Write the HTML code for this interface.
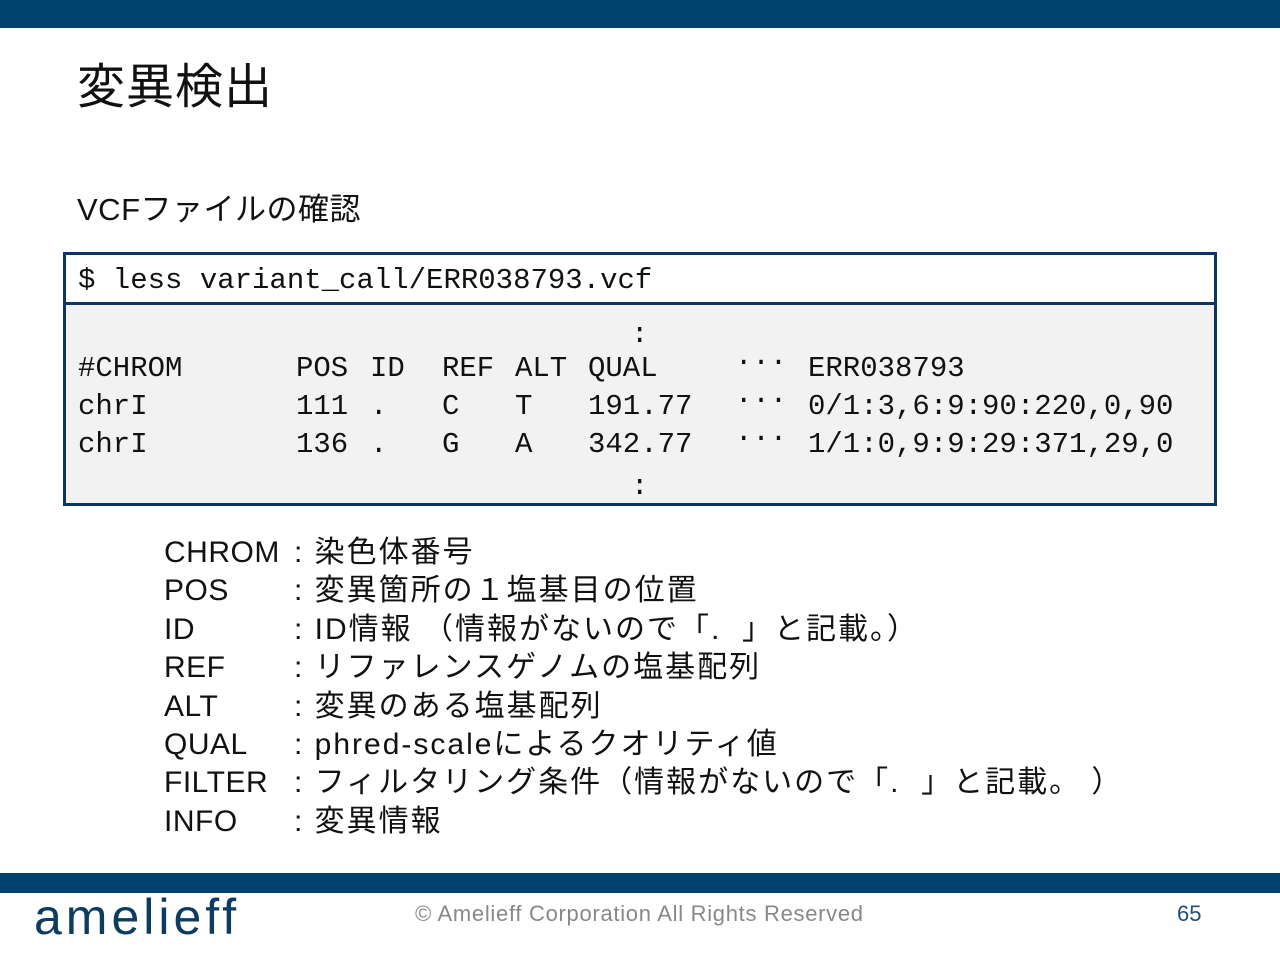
<!DOCTYPE html>
<html><head><meta charset="utf-8"><style>
body{margin:0;width:1280px;height:960px;position:relative;background:#fff;overflow:hidden;font-family:"Liberation Sans","Noto Sans CJK JP",sans-serif;color:#111}
.a{position:absolute;white-space:nowrap}
.m{font-family:"Liberation Mono","DejaVu Sans Mono",monospace;font-size:29px;color:#111}
.d{font-size:30px}
</style></head><body>
<div class="a" style="left:0;top:0;width:1280px;height:28px;background:#02426f"></div>
<div class="a" style="left:77px;top:58px;font-size:48px;line-height:60px;letter-spacing:1px">変異検出</div>
<div class="a" style="left:77px;top:190px;font-size:31px;line-height:40px;letter-spacing:0.5px">VCFファイルの確認</div>
<div class="a" style="left:63px;top:252px;width:1148px;height:248px;border:3px solid #0b3663;background:#f2f2f2"></div>
<div class="a" style="left:66px;top:255px;width:1148px;height:47px;background:#fff;border-bottom:3px solid #0b3663"></div>
<div class="a m" style="left:78px;top:264px">$ less variant_call/ERR038793.vcf</div>
<div class="a m" style="left:631px;top:318px">:</div>
<div class="a m" style="left:631px;top:470px">:</div>
<div class="a m" style="left:78px;top:352px">#CHROM</div>
<div class="a m" style="left:296px;top:352px">POS</div>
<div class="a m" style="left:370px;top:352px">ID</div>
<div class="a m" style="left:442px;top:352px">REF</div>
<div class="a m" style="left:515px;top:352px">ALT</div>
<div class="a m" style="left:588px;top:352px">QUAL</div>
<div class="a m" style="left:735px;top:346px">···</div>
<div class="a m" style="left:808px;top:352px">ERR038793</div>
<div class="a m" style="left:78px;top:390px">chrI</div>
<div class="a m" style="left:296px;top:390px">111</div>
<div class="a m" style="left:370px;top:390px">.</div>
<div class="a m" style="left:442px;top:390px">C</div>
<div class="a m" style="left:515px;top:390px">T</div>
<div class="a m" style="left:588px;top:390px">191.77</div>
<div class="a m" style="left:735px;top:384px">···</div>
<div class="a m" style="left:808px;top:390px">0/1:3,6:9:90:220,0,90</div>
<div class="a m" style="left:78px;top:428px">chrI</div>
<div class="a m" style="left:296px;top:428px">136</div>
<div class="a m" style="left:370px;top:428px">.</div>
<div class="a m" style="left:442px;top:428px">G</div>
<div class="a m" style="left:515px;top:428px">A</div>
<div class="a m" style="left:588px;top:428px">342.77</div>
<div class="a m" style="left:735px;top:422px">···</div>
<div class="a m" style="left:808px;top:428px">1/1:0,9:9:29:371,29,0</div>
<div class="a d" style="left:164px;top:534px;line-height:38.4px;letter-spacing:0.5px">CHROM<br>POS<br>ID<br>REF<br>ALT<br>QUAL<br>FILTER<br>INFO</div>
<div class="a d" style="left:294px;top:534px;line-height:38.4px;letter-spacing:2px">: 染色体番号<br>: 変異箇所の１塩基目の位置<br>: ID情報 （情報がないので「.&nbsp;&nbsp;」と記載。）<br>: リファレンスゲノムの塩基配列<br>: 変異のある塩基配列<br>: phred-scaleによるクオリティ値<br>: フィルタリング条件（情報がないので「.&nbsp;&nbsp;」と記載。 ）<br>: 変異情報</div>
<div class="a" style="left:0;top:873px;width:1280px;height:20px;background:#02426f"></div>
<div class="a" style="left:34px;top:888px;font-size:50px;color:#0d3c61;letter-spacing:4px">amelieff</div>
<div class="a" style="left:415px;top:901px;font-size:22px;color:#888;letter-spacing:0.7px">© Amelieff Corporation All Rights Reserved</div>
<div class="a" style="left:1177px;top:901px;font-size:22px;color:#1d4f7f">65</div>
</body></html>
